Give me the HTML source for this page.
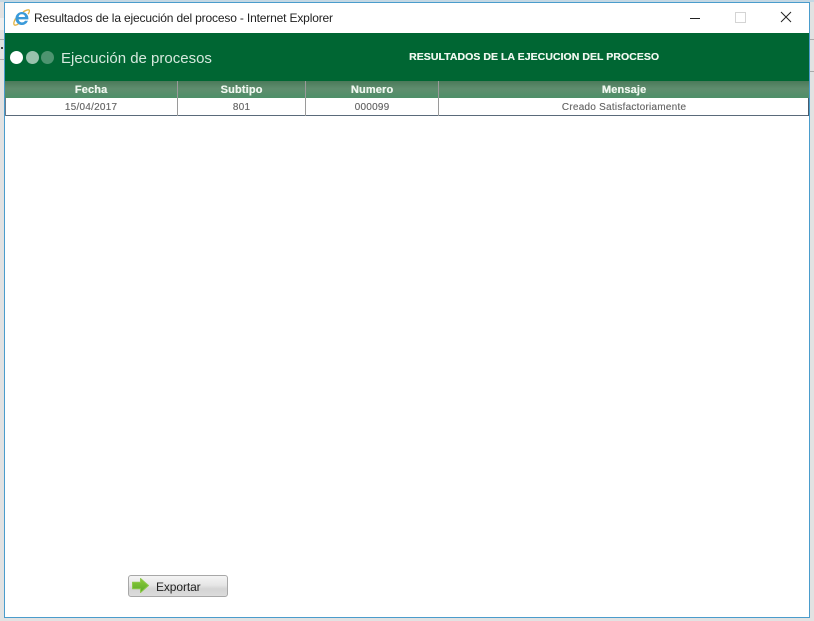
<!DOCTYPE html>
<html lang="es"><head><meta charset="utf-8"><title>Resultados de la ejecución del proceso</title>
<style>
html,body{margin:0;padding:0;width:814px;height:621px;overflow:hidden;background:#e2e2e2;font-family:"Liberation Sans",sans-serif}
.a{position:absolute;white-space:nowrap}
.c{text-align:center}
.hd{top:82px;height:15px;line-height:16px;font-size:11px;font-weight:bold;color:#eef6ee;letter-spacing:.15px;text-shadow:.3px 0 0 #eef6ee}
.td{top:99px;height:17px;line-height:17px;font-size:10px;color:#6a6a6a;letter-spacing:.24px;text-shadow:.2px 0 0 #888}
.v{width:1px;background:#8a8a8a}
</style></head><body>
<div class="a" style="left:0;top:0;width:814px;height:2px;background:#c4d8e4"></div>
<div class="a" style="left:0;top:18px;width:4px;height:12px;background:#efefef"></div>
<div class="a" style="left:0;top:39px;width:4px;height:1px;background:#aaa"></div>
<div class="a" style="left:1px;top:47px;width:2px;height:2px;background:#444"></div>
<div class="a" style="left:0;top:59px;width:4px;height:1px;background:#aaa"></div>
<div class="a" style="left:810px;top:39px;width:4px;height:1px;background:#aaa"></div>
<div class="a" style="left:810px;top:71px;width:4px;height:1px;background:#aaa"></div>
<div class="a" style="left:4px;top:2px;width:804px;height:614px;background:#fff;border:1px solid #4a9ccc"></div>

<svg class="a" style="left:13px;top:9px" width="17" height="17" viewBox="0 0 17 17">
<path d="M2.600 9.500C1 12.500.4 15 1.300 15.800c1 .8 3-.1 4.600-1.300" fill="none" stroke="#e3b54a" stroke-width="1.400"/>
<path d="M10 3C13 1 15.600.4 16.200 1.200c.5.7-.1 2.300-1.100 4" fill="none" stroke="#e3b54a" stroke-width="1.400"/>
<path d="M8.800 3a6.500 6.500 0 1 0 6.200 8.800h-3a3.500 3.500 0 0 1-6.400-1.400H15.400V9.500A6.500 6.500 0 0 0 8.800 3zM5.600 8a3.300 3.300 0 0 1 6.500 0z" fill="#3a9ad9"/>
</svg>
<div class="a" style="left:34px;top:10px;height:16px;line-height:16px;font-size:12px;color:#222;letter-spacing:-.16px">Resultados de la ejecución del proceso - Internet Explorer</div>

<div class="a" style="left:690px;top:18px;width:10px;height:1px;background:#222"></div>
<div class="a" style="left:735px;top:12px;width:9px;height:9px;border:1px solid #d4d4d4"></div>
<svg class="a" style="left:780px;top:11px" width="12" height="12" viewBox="0 0 12 12"><path d="M1 1L11 11M11 1L1 11" stroke="#222" stroke-width="1" fill="none"/></svg>

<div class="a" style="left:5px;top:33px;width:804px;height:48px;background:#006633"></div>
<div class="a" style="left:10px;top:51px;width:13px;height:13px;border-radius:50%;background:#fff"></div>
<div class="a" style="left:26px;top:51px;width:13px;height:13px;border-radius:50%;background:#99c2ad"></div>
<div class="a" style="left:41px;top:51px;width:13px;height:13px;border-radius:50%;background:#4d9470"></div>
<div class="a" style="left:61px;top:50px;height:18px;line-height:18px;font-size:15px;color:#d5e8dd">Ejecución de procesos</div>
<div class="a" style="left:409px;top:50px;height:15px;line-height:15px;font-size:10.5px;font-weight:bold;color:#eef6ee;letter-spacing:.05px;text-shadow:.2px 0 0 #eef6ee">RESULTADOS DE LA EJECUCION DEL PROCESO</div>

<div class="a" style="left:5px;top:81px;width:804px;height:17px;background:linear-gradient(#4b7a5a,#5f8d6e 45%,#4d8f68)"></div>
<div class="a" style="left:5px;top:98px;width:803px;height:17px;background:#fff"></div>
<div class="a" style="left:5px;top:115px;width:804px;height:1px;background:#5a6a7a"></div>
<div class="a v" style="left:5px;top:98px;height:18px;background:#6a7a8a"></div>
<div class="a v" style="left:808px;top:98px;height:18px;background:#4a5a6a"></div>
<div class="a v" style="left:177px;top:81px;height:35px;background:#9a9a9a"></div>
<div class="a v" style="left:305px;top:81px;height:35px;background:#9a9a9a"></div>
<div class="a v" style="left:438px;top:81px;height:35px;background:#9a9a9a"></div>

<div class="a c hd" style="left:5px;width:172px">Fecha</div>
<div class="a c hd" style="left:178px;width:127px">Subtipo</div>
<div class="a c hd" style="left:306px;width:132px">Numero</div>
<div class="a c hd" style="left:439px;width:370px">Mensaje</div>
<div class="a c td" style="left:5px;width:172px">15/04/2017</div>
<div class="a c td" style="left:178px;width:127px">801</div>
<div class="a c td" style="left:306px;width:132px">000099</div>
<div class="a c td" style="left:439px;width:370px">Creado Satisfactoriamente</div>

<div class="a" style="left:128px;top:575px;width:98px;height:20px;border:1px solid #a8a8a8;border-radius:3px;background:linear-gradient(#f4f4f4,#e6e6e6 45%,#d4d4d4 65%,#dcdcdc)"></div>
<svg class="a" style="left:132px;top:578px" width="17" height="15" viewBox="0 0 17 15"><defs><linearGradient id="g" x1="0" y1="0" x2="0" y2="1"><stop offset="0" stop-color="#8ccc3a"/><stop offset="1" stop-color="#5aa82a"/></linearGradient></defs><path d="M.5 4.200H8.500V.5L16.500 7.500 8.500 14.500V10.800H.5z" fill="url(#g)" stroke="#8cc84a" stroke-width="1" stroke-linejoin="round"/></svg>
<div class="a" style="left:156px;top:580px;height:15px;line-height:15px;font-size:12px;color:#222;letter-spacing:-.1px">Exportar</div>
</body></html>
